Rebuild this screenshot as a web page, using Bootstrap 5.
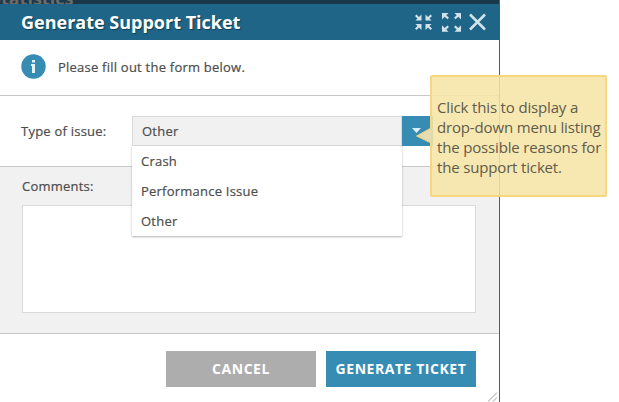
<!DOCTYPE html>
<html lang="en">
<head>
<meta charset="utf-8">
<meta name="viewport" content="width=device-width, initial-scale=1">
<title>Generate Support Ticket</title>
<link href="https://cdn.jsdelivr.net/npm/bootstrap@5.3.0/dist/css/bootstrap.min.css" rel="stylesheet">
<style>
body{font-family:"Open Sans",sans-serif;font-size:13px;font-weight:500;letter-spacing:.23px;-webkit-text-stroke:.2px currentColor;line-height:20px;color:#4d4d4d;background:#fff;overflow:hidden}
.ticket-window{width:500px;height:402px;border-right:1px solid #5a5a5a}
.page-strip{height:4px;background:#19394a;color:#6b6b6b;font-size:18px;font-weight:700;line-height:20px}
.page-strip span{display:block;margin:-12px 0 0 -9px}
.ticket-head{height:36px;background:#1f6587;padding:0 13px 0 21px;color:#fff}
.ticket-title,.actions,.hint,.page-strip{letter-spacing:0;-webkit-text-stroke:0}
.ticket-title{font-size:18px;font-weight:700;line-height:36px;text-shadow:1px 1px 1px rgba(0,0,0,.4)}
.head-icons{color:#d3e3eb}
.intro{height:56px;padding:0 21px 2px;border-bottom:1px solid #c9c9c9}
.issue-row{height:71px;padding:0 21px;border-bottom:1px solid #c9c9c9}
.issue-row label{width:111px}
.picker{width:301px;height:30px}
.picker-value{width:270px;background:#f1f1f1;border:1px solid #dadada;padding-left:9px}
.picker-btn{width:31px;background:#368cb3}
.picker-list{top:30px;left:0;width:270px;height:90px;background:#fff;box-shadow:0 1px 2px rgba(0,0,0,.3);z-index:5}
.picker-list li{height:30px;line-height:30px;padding-left:9px}
.comment-area{height:167px;background:#f1f1f1;padding:9px 23px 0 22px;border-bottom:1px solid #c9c9c9}
.comment-area textarea{height:108px;margin-top:9px;border:1px solid #dadada;resize:none}
.actions{padding:17px 23px 0 0;gap:10px}
.actions .btn{width:150px;height:36px;font-size:14px;letter-spacing:.55px;font-weight:700;line-height:20px;padding:0;color:#fff}
.actions .btn-stop{background:#adadad}
.btn-go{background:#368cb3}
.grip{right:1px;bottom:0}
.hint{left:430px;top:75px;width:178px;height:122px;z-index:10;font-size:15px;font-weight:400;letter-spacing:-.16px;color:#5f5b4c}
.hint-box{width:177px;height:122px;padding:20px 0 0 5px;background:rgba(246,229,166,.88);border:2px solid #f6d680;border-radius:2px}
.hint-box span{display:block;white-space:nowrap}
.hint-tail{left:-15px;top:51px}
</style>
<script src="https://cdn.jsdelivr.net/npm/bootstrap@5.3.0/dist/js/bootstrap.bundle.min.js"></script>
</head>
<body>
<main class="ticket-window position-relative d-flex flex-column">
  <div class="page-strip overflow-hidden"><span>Statistics</span></div>
  <header class="ticket-head d-flex justify-content-between align-items-center">
    <h1 class="ticket-title m-0">Generate Support Ticket</h1>
    <svg class="head-icons" width="72" height="20" viewBox="414 12 72 20" fill="currentColor">
      <path d="M421.500 14.500v6h-6l2-2-2.500-2.500 1.500-1.500 2.500 2.500zM425.500 14.500v6h6l-2-2 2.500-2.500-1.500-1.500-2.500 2.500zM421.500 30v-6h-6l2 2-2.500 2.500 1.500 1.500 2.500-2.500zM425.500 30v-6h6l-2 2 2.500 2.500-1.500 1.500-2.500-2.500z"/>
      <path d="M442 13h6.500l-2.200 2.200 2.700 2.500-1.600 1.600-2.700-2.500-2.700 2.700zM461 13h-6.500l2.200 2.200-2.700 2.500 1.600 1.600 2.700-2.500 2.700 2.700zM442 31.800h6.500l-2.200-2.200 2.700-2.500-1.600-1.600-2.700 2.500-2.700-2.700zM461 31.800h-6.500l2.200-2.200-2.700-2.500 1.600-1.600 2.700 2.500 2.700-2.700z"/>
      <path d="M470 14.500 485 29.500M485 14.500 470 29.500" stroke="currentColor" stroke-width="2.500" fill="none"/>
    </svg>
  </header>
  <section class="intro d-flex align-items-center">
    <svg width="25" height="25" viewBox="0 0 25 25"><circle cx="12.500" cy="12.500" r="12.200" fill="#368cb3"/><path fill="#e7f2f7" d="M11 6h3v2.500h-3zM10 10h4v9h-3v-7h-1z"/></svg>
    <span class="intro-text ms-2 ps-1">Please fill out the form below.</span>
  </section>
  <section class="issue-row d-flex align-items-center">
    <label>Type of issue:</label>
    <div class="picker position-relative d-flex">
      <div class="picker-value d-flex align-items-center">Other</div>
      <div class="picker-btn d-flex align-items-center ps-2"><svg width="14" height="8" viewBox="0 0 14 8"><path fill="#d9eef8" d="M2 1h9L6.500 6z"/></svg></div>
      <ul class="picker-list position-absolute list-unstyled m-0">
        <li>Crash</li><li>Performance Issue</li><li>Other</li>
      </ul>
    </div>
  </section>
  <section class="comment-area">
    <label class="d-block" for="comments">Comments:</label>
    <textarea id="comments" class="d-block w-100 bg-white"></textarea>
  </section>
  <footer class="actions d-flex justify-content-end">
    <button class="btn btn-stop rounded-0 border-0" type="button">CANCEL</button>
    <button class="btn btn-go rounded-0 border-0" type="button">GENERATE TICKET</button>
  </footer>
  <svg class="grip position-absolute" width="10" height="10" viewBox="0 0 10 10"><path d="M0 9.500 9 .5M5 9.500 9 5.500" stroke="#999" fill="none"/></svg>
  <aside class="hint position-absolute">
    <div class="hint-box"><span>Click this to display a</span><span>drop-down menu listing</span><span>the possible reasons for</span><span>the support ticket.</span></div>
    <svg class="hint-tail position-absolute" width="17" height="18" viewBox="0 0 17 18"><path d="M16 2 1.500 10 16 17" fill="#e5ddb0" stroke="#f0cf72"/></svg>
  </aside>
</main>
</body>
</html>
